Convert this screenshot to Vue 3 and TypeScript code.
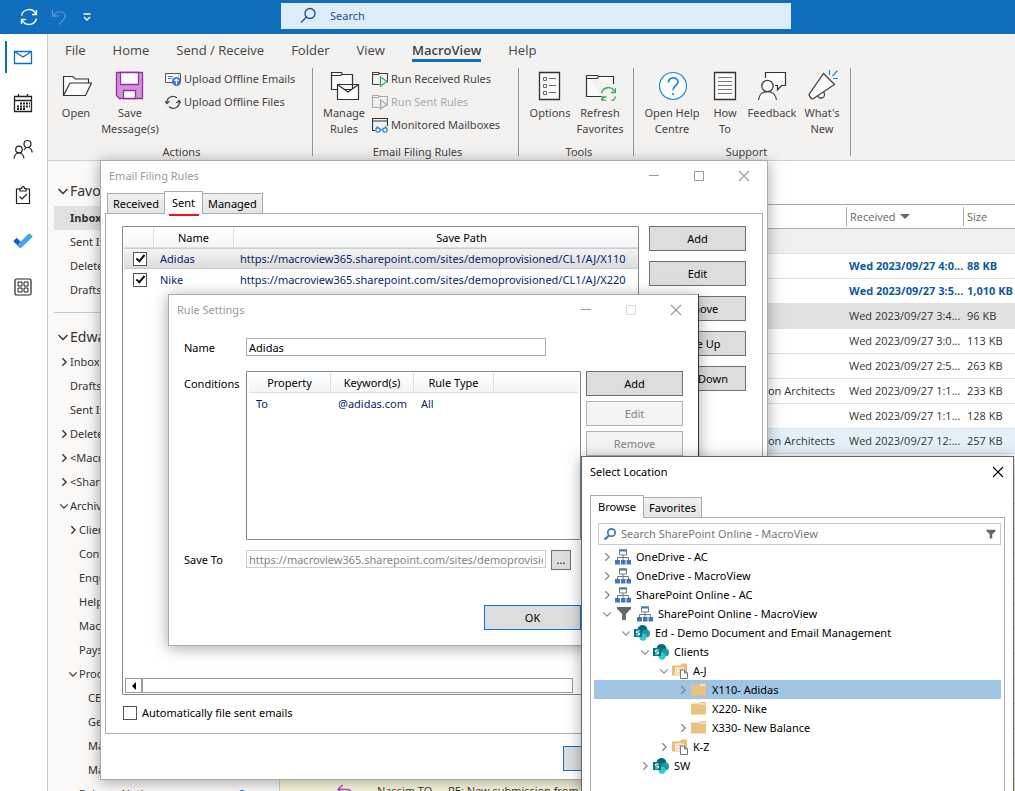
<script setup lang="ts">
import { ref } from 'vue'

interface Folder { name: string; level: number; chevron?: 'down' | 'right'; active?: boolean; count?: number }
interface Mail { from?: string; subject?: string; to?: string; received?: string; size?: string; kind?: string; reply?: boolean }
interface Node { name: string; level: number; chevron?: 'down' | 'right'; icon: string; filter?: boolean; selected?: boolean }

const tabs = ['File', 'Home', 'Send / Receive', 'Folder', 'View', 'MacroView', 'Help']
const activeTab = ref('MacroView')

const rail = ['mail', 'calendar', 'people', 'tasks', 'todo', 'apps']

const favorites: Folder[] = [
  { name: 'Inbox', level: 0, active: true },
  { name: 'Sent Items', level: 0 },
  { name: 'Deleted Items', level: 0 },
  { name: 'Drafts', level: 0 },
]

const mailbox: Folder[] = [
  { name: 'Inbox', level: 0, chevron: 'right' },
  { name: 'Drafts', level: 0 },
  { name: 'Sent Items', level: 0 },
  { name: 'Deleted Items', level: 0, chevron: 'right' },
  { name: '<MacroView>', level: 0, chevron: 'right' },
  { name: '<Shared>', level: 0, chevron: 'right' },
  { name: 'Archive', level: 0, chevron: 'down' },
  { name: 'Clients', level: 1, chevron: 'right' },
  { name: 'Contacts', level: 1 },
  { name: 'Enquiries', level: 1 },
  { name: 'Help', level: 1 },
  { name: 'MacroView', level: 1 },
  { name: 'Payslips', level: 1 },
  { name: 'Products', level: 1, chevron: 'down' },
  { name: 'CES', level: 2 },
  { name: 'General', level: 2 },
  { name: 'Mail', level: 2 },
  { name: 'Management', level: 2 },
  { name: 'Release Notices', level: 1, count: 8 },
]

const mails: Mail[] = [
  { received: 'Wed 2023/09/27 4:0...', size: '88 KB', kind: 'unread' },
  { received: 'Wed 2023/09/27 3:5...', size: '1,010 KB', kind: 'unread' },
  { received: 'Wed 2023/09/27 3:4...', size: '96 KB', kind: 'selected' },
  { received: 'Wed 2023/09/27 3:0...', size: '113 KB' },
  { received: 'Wed 2023/09/27 2:5...', size: '263 KB' },
  { to: 'Byron Architects', received: 'Wed 2023/09/27 1:1...', size: '233 KB' },
  { received: 'Wed 2023/09/27 1:1...', size: '128 KB' },
  { to: 'Byron Architects', received: 'Wed 2023/09/27 12:...', size: '257 KB', kind: 'hover' },
  ...Array.from({ length: 13 }, (): Mail => ({})),
  { from: 'Nassim TO...', subject: 'RE: New submission from', kind: 'flagged', reply: true },
]

const rules = ref([
  { on: true, name: 'Adidas', path: 'https://macroview365.sharepoint.com/sites/demoprovisioned/CL1/AJ/X110' },
  { on: true, name: 'Nike', path: 'https://macroview365.sharepoint.com/sites/demoprovisioned/CL1/AJ/X220' },
])
const ruleActions = ['Add', 'Edit', 'Remove', 'Move Up', 'Move Down']

const ruleName = ref('Adidas')
const saveTo = 'https://macroview365.sharepoint.com/sites/demoprovisioned/CL1/AJ/X110'
const autoFile = ref(false)
const query = ref('')

const tree: Node[] = [
  { name: 'OneDrive - AC', level: 0, chevron: 'right', icon: 'site' },
  { name: 'OneDrive - MacroView', level: 0, chevron: 'right', icon: 'site' },
  { name: 'SharePoint Online - AC', level: 0, chevron: 'right', icon: 'site' },
  { name: 'SharePoint Online - MacroView', level: 0, chevron: 'down', icon: 'site', filter: true },
  { name: 'Ed - Demo Document and Email Management', level: 1, chevron: 'down', icon: 'sharepoint' },
  { name: 'Clients', level: 2, chevron: 'down', icon: 'sharepoint' },
  { name: 'A-J', level: 3, chevron: 'down', icon: 'library' },
  { name: 'X110- Adidas', level: 4, chevron: 'right', icon: 'folder', selected: true },
  { name: 'X220- Nike', level: 4, icon: 'folder' },
  { name: 'X330- New Balance', level: 4, chevron: 'right', icon: 'folder' },
  { name: 'K-Z', level: 3, chevron: 'right', icon: 'library' },
  { name: 'SW', level: 2, chevron: 'right', icon: 'sharepoint' },
]
</script>

<template>
  <div class="app">
    <svg class="sprite" aria-hidden="true">
      <symbol id="i-mail" viewBox="0 0 20 20"><path d="M1.5 4.5h17v12h-17zM1.5 4.5l8.500 5.500 8.500-5.500" fill="none" stroke="#0f6cbd" stroke-width="1.300" /></symbol>
      <symbol id="i-calendar" viewBox="0 0 20 20">
        <path d="M1.500 3.500h17v15h-17zM1.500 7.500h17M5.500 1v3M14.500 1v3" fill="none" stroke="#222" stroke-width="1.300" />
        <path d="M7 10.500h10M4 13.500h13M4 16h8" fill="none" stroke="#222" stroke-width="2" stroke-dasharray="2 1" />
      </symbol>
      <symbol id="i-people" viewBox="0 0 20 20">
        <g fill="none" stroke="#222" stroke-width="1.200"><circle cx="6" cy="10.500" r="3.300" /><path d="M1 19.500c.4-3.500 2.300-5.500 5-5.500s4.500 2 5 5.500" /><circle cx="14.500" cy="5" r="3.500" /><path d="M11 11c.8-1.500 2-2.500 3.500-2.500 2.600 0 4.300 2 4.700 5" /></g>
      </symbol>
      <symbol id="i-tasks" viewBox="0 0 20 20"><path d="M7 4H3.500v14.500h13V4H13M7 6V3.500h1.500C8.500 1 11.500 1 11.500 3.500H13V6zM6.500 11.500l2.500 2.500 5-5" fill="none" stroke="#222" stroke-width="1.200" /></symbol>
      <symbol id="i-todo" viewBox="0 0 20 20"><path d="M2 8.500l6.500 6.500" stroke="#185abd" stroke-width="5" /><path d="M6 15.500L18 4" stroke="#41a5ee" stroke-width="5" /></symbol>
      <symbol id="i-apps" viewBox="0 0 20 20"><rect x="2" y="2" width="16" height="16" rx="1.500" fill="none" stroke="#222" stroke-width="1.200" /><path d="M5 5h4v4H5zM11 5h4v4h-4zM5 11h4v4H5zM11 11h4v4h-4z" fill="none" stroke="#222" /></symbol>

      <symbol id="i-sync" viewBox="0 0 18 18"><path d="M1.500 7.500A7.700 7.700 0 0 1 16 6M16.500 2v4.500H12M16.500 10.500A7.700 7.700 0 0 1 2 12M1.500 16v-4.500H6" fill="none" stroke="currentColor" stroke-width="1.300" /></symbol>
      <symbol id="i-search" viewBox="0 0 18 18"><circle cx="11" cy="6.500" r="5" fill="none" stroke="currentColor" stroke-width="1.300" /><path d="M7.500 10L2 15.500" stroke="currentColor" stroke-width="1.300" /></symbol>

      <symbol id="i-open" viewBox="0 0 32 32"><path d="M3.500 26.500v-19h9l3 2.500h13v4.500" fill="#fafafa" stroke="#333" stroke-width="1.200" /><path d="M3.500 26.500l6.500-12.500h21.500l-6 12.500z" fill="#fafafa" stroke="#333" stroke-width="1.200" /></symbol>
      <symbol id="i-save" viewBox="0 0 32 32"><path d="M2.500 3.500h26v26h-23l-3-3z" fill="#d592d8" stroke="#9331a0" stroke-width="1.300" /><path d="M6.500 3.500h18v12h-18zM9.500 21.500h12v8h-12z" fill="#fafafa" stroke="#9331a0" stroke-width="1.300" /></symbol>
      <symbol id="i-manage" viewBox="0 0 32 32"><path d="M3.500 3.500v17h21v-15h-10l-1-2h-10zM3.500 6.500h9l2-1" fill="#fafafa" stroke="#333" stroke-width="1.200" /><path d="M9.500 15.500h21v15h-21zM9.500 15.500L20 23l10.500-7.500" fill="#fafafa" stroke="#333" stroke-width="1.200" /></symbol>
      <symbol id="i-options" viewBox="0 0 32 32"><path d="M5.500 3.500h20v27h-20z" fill="#fafafa" stroke="#333" stroke-width="1.300" /><path d="M9.500 8.500h3v3h-3zM9.500 15.500h3v3h-3zM9.500 22.500h3v3h-3zM15 9.500h7M15 16.500h7M15 23.500h7" fill="none" stroke="#666" /></symbol>
      <symbol id="i-refresh" viewBox="0 0 32 32"><path d="M2.500 6.500v21h15M29.500 15V7.500h-15l-1-1h-11M2.500 9.500h11l1-2" fill="#fafafa" stroke="#333" stroke-width="1.200" /><path d="M17.500 24a7 7 0 0 1 13-1.500M31.500 19v4.500H27M31.500 27.500a7 7 0 0 1-13 1.500M18 32v-4h4.500" fill="none" stroke="#38a857" stroke-width="1.300" /></symbol>
      <symbol id="i-help" viewBox="0 0 32 32"><circle cx="17" cy="17" r="13.500" fill="#fafafa" stroke="#1e8bcd" stroke-width="1.200" /><path d="M12.500 13.500c0-6 9.500-6 9.500-.5 0 4-5 3.500-5 8M17 24v2" fill="none" stroke="#1e8bcd" stroke-width="1.700" /></symbol>
      <symbol id="i-howto" viewBox="0 0 32 32"><path d="M5.500 3.500h21v27h-21z" fill="#fafafa" stroke="#333" stroke-width="1.300" /><path d="M9 8.500h14M9 12.500h14M9 16.500h14M9 20.500h14M9 24.500h14" stroke="#777" /></symbol>
      <symbol id="i-feedback" viewBox="0 0 32 32"><path d="M9.500 9V3.500h20v13h-4L21.500 21v-4.500H19" fill="#fafafa" stroke="#333" stroke-width="1.200" /><path d="M2.500 31c.5-5 4-8.500 9-8.500s8.500 3.500 9 8.500" fill="#fafafa" stroke="#444" stroke-width="1.300" /><circle cx="11.500" cy="17" r="5.700" fill="#fafafa" stroke="#444" stroke-width="1.300" /></symbol>
      <symbol id="i-news" viewBox="0 0 32 32"><circle cx="15" cy="25.500" r="3.500" fill="#fafafa" stroke="#444" stroke-width="1.300" /><path d="M17.500 4.500l11 11L7.500 29.500q-1.500 1-3-1t-1.500-3z" fill="#fafafa" stroke="#444" stroke-width="1.300" /><path d="M23.500 1v5M31.500 1.500l-5 5.500M27 9.500h5" stroke="#1e8bcd" stroke-width="1.200" /></symbol>

      <symbol id="i-upmail" viewBox="0 0 16 16"><path d="M.5 2.500h15v9H.5z" fill="#fafafa" stroke="#555" /><path d="M3 5.500h5M3 7.500h4M13 4.500h1" stroke="#4a7ebb" /><circle cx="11.500" cy="10.500" r="4.500" fill="#3f7bbf" /><path d="M11.500 13.500v-5M9.500 10l2-2 2 2" fill="none" stroke="#fff" stroke-width="1.200" /></symbol>
      <symbol id="i-upfiles" viewBox="0 0 16 16"><path d="M2 9a6 6 0 0 1 10-5M14 6.500a6 6 0 0 1-10 6M0 7l2 2.500L4.500 7M11.500 9L14 6.500 16 9" fill="none" stroke="#444" stroke-width="1.200" /></symbol>
      <symbol id="i-run" viewBox="0 0 16 16"><path d="M.5 13.500V1.500h6l1 1h8v9M.5 3.500h6l1-1M.5 13.500h7" fill="none" stroke="#444" stroke-width="1.200" /><path d="M8.500 6v9l6.500-4.500z" fill="#fafafa" stroke="#38a857" stroke-width="1.300" /></symbol>
      <symbol id="i-run-off" viewBox="0 0 16 16"><path d="M.5 13.500V1.500h6l1 1h8v9M.5 3.500h6l1-1M.5 13.500h7" fill="none" stroke="#aaa" stroke-width="1.200" /><path d="M8.500 6v9l6.500-4.500z" fill="#eee" stroke="#aaa" stroke-width="1.300" /></symbol>
      <symbol id="i-monitor" viewBox="0 0 16 16"><path d="M3 13.500H.5v-12h15V9M.5 4h15" fill="none" stroke="#333" stroke-width="1.200" /><g fill="none" stroke="#1e8bcd" stroke-width="1.200"><circle cx="6" cy="13" r="2.200" /><circle cx="13" cy="13" r="2.200" /><path d="M8 12.500h3M4 11.500l2-2M15 11.500l-2-2" /></g></symbol>

      <symbol id="i-min" viewBox="0 0 12 12"><path d="M1 5.500h10" stroke="currentColor" /></symbol>
      <symbol id="i-max" viewBox="0 0 12 12"><path d="M1.500 1.500h9v9h-9z" fill="none" stroke="currentColor" /></symbol>
      <symbol id="i-close" viewBox="0 0 12 12"><path d="M1 1l10 10M11 1L1 11" stroke="currentColor" stroke-width="1.100" /></symbol>
      <symbol id="i-down" viewBox="0 0 12 12"><path d="M1.500 4L6 8.500 10.500 4" fill="none" stroke="currentColor" stroke-width="1.400" /></symbol>
      <symbol id="i-right" viewBox="0 0 12 12"><path d="M4 1.500L8.500 6 4 10.500" fill="none" stroke="currentColor" stroke-width="1.600" /></symbol>
      <symbol id="i-find" viewBox="0 0 14 14"><circle cx="8.500" cy="5.500" r="3.700" fill="none" stroke="#3c78b4" stroke-width="1.700" /><path d="M6 8.500L1.500 12.500" stroke="#3c78b4" stroke-width="2.300" /></symbol>
      <symbol id="i-filter" viewBox="0 0 16 16"><path d="M.5 1h15v2L10 8.500V15H6V8.500L.5 3z" fill="#666" /></symbol>

      <symbol id="i-site" viewBox="0 0 16 16"><path d="M4.500 1h7v5h-7z" fill="#fff" stroke="#777" /><path d="M4 .5h8v2H4z" fill="#4179b5" /><path d="M8 6v3M2.500 11V8.500h11V11M8 8.500V11" fill="none" stroke="#777" /><path d="M0 11h5v4.500H0zM6 11h4.500v4.500H6zM11.500 11H16v4.500h-4.500z" fill="#4179b5" /></symbol>
      <symbol id="i-sharepoint" viewBox="0 0 16 16"><circle cx="8.500" cy="5" r="5" fill="#036c70" /><circle cx="12" cy="8.500" r="4" fill="#1a9ba1" /><circle cx="9" cy="12.300" r="3.500" fill="#37c6d0" /><path d="M0 4h8v8H0z" fill="#03787c" /><path d="M5.800 6H3.300c-1 .2-1 1.800 0 2h1.500c1 .2 1 1.800 0 2H2.200" fill="none" stroke="#fff" stroke-width="1.100" /></symbol>
      <symbol id="i-library" viewBox="0 0 16 16"><path d="M0 2.500h8L9.500.5H15v12H0z" fill="#e9be7a" /><path d="M3.500 5h8v6h-8zM3.500 8h8M6 5v6" fill="none" stroke="#fff" /><path d="M8.500 7h4l3 3v5.500h-7zM12.500 7v3h3" fill="#fff" stroke="#777" /></symbol>
      <symbol id="i-folder" viewBox="0 0 16 16"><path d="M0 2.500h8L9.500 1H15v12.500H0z" fill="#eac282" /><path d="M9 3h5.500" stroke="#fff" /></symbol>
    </svg>

    <header class="titlebar">
      <div class="quick">
        <button aria-label="Send and receive"><svg width="18" height="18"><use href="#i-sync" /></svg></button>
        <button aria-label="Undo" class="faded"><svg width="18" height="18" viewBox="0 0 18 18"><path d="M2.500 1.500v6.500H9M3 7.500C7 2 15.500 3 15 8.500c0 3-4.500 6-6.500 8" fill="none" stroke="currentColor" stroke-width="1.300" /></svg></button>
        <button aria-label="Customize toolbar"><svg width="10" height="10" viewBox="0 0 10 10"><path d="M1.500 2h7M2 5l3 3 3-3" fill="none" stroke="currentColor" stroke-width="1.300" /></svg></button>
      </div>
      <label class="top-search">
        <svg width="18" height="18"><use href="#i-search" /></svg>
        <input type="text" placeholder="Search" aria-label="Search" />
      </label>
    </header>

    <div class="shell">
      <nav class="rail">
        <button v-for="(r, i) in rail" :key="r" :class="{ active: i === 0 }" :aria-label="r">
          <svg width="20" height="20"><use :href="'#i-' + r" /></svg>
        </button>
      </nav>

      <div class="main">
        <section class="ribbon">
          <nav class="tabs">
            <button v-for="t in tabs" :key="t" :class="{ active: t === activeTab }" @click="activeTab = t">{{ t }}</button>
          </nav>
          <div class="groups">
            <div class="group actions">
              <div class="tools">
                <button class="big w52"><svg><use href="#i-open" /></svg><span>Open</span></button>
                <button class="big w56"><svg><use href="#i-save" /></svg><span>Save<br />Message(s)</span></button>
                <div class="small-tools spaced">
                  <button><svg><use href="#i-upmail" /></svg>Upload Offline Emails</button>
                  <button><svg><use href="#i-upfiles" /></svg>Upload Offline Files</button>
                </div>
              </div>
              <div class="caption">Actions</div>
            </div>
            <div class="group filing">
              <div class="tools">
                <button class="big w56"><svg><use href="#i-manage" /></svg><span>Manage<br />Rules</span></button>
                <div class="small-tools">
                  <button><svg><use href="#i-run" /></svg>Run Received Rules</button>
                  <button disabled><svg><use href="#i-run-off" /></svg>Run Sent Rules</button>
                  <button><svg><use href="#i-monitor" /></svg>Monitored Mailboxes</button>
                </div>
              </div>
              <div class="caption">Email Filing Rules</div>
            </div>
            <div class="group extras">
              <div class="tools">
                <button class="big w52"><svg><use href="#i-options" /></svg><span>Options</span></button>
                <button class="big w48"><svg><use href="#i-refresh" /></svg><span>Refresh<br />Favorites</span></button>
              </div>
              <div class="caption">Tools</div>
            </div>
            <div class="group support">
              <div class="tools">
                <button class="big w60"><svg><use href="#i-help" /></svg><span>Open Help<br />Centre</span></button>
                <button class="big w46"><svg><use href="#i-howto" /></svg><span>How<br />To</span></button>
                <button class="big w48"><svg><use href="#i-feedback" /></svg><span>Feedback</span></button>
                <button class="big w52"><svg><use href="#i-news" /></svg><span>What's<br />New</span></button>
              </div>
              <div class="caption">Support</div>
            </div>
          </div>
        </section>

        <div class="content">
          <aside class="folders">
            <h2><svg width="12" height="12"><use href="#i-down" /></svg>Favorites</h2>
            <ul>
              <li v-for="f in favorites" :key="f.name" :class="{ active: f.active }"><i class="twist"></i><span>{{ f.name }}</span></li>
            </ul>
            <hr />
            <h2><svg width="12" height="12"><use href="#i-down" /></svg>Edward</h2>
            <ul>
              <li v-for="(f, i) in mailbox" :key="i" :class="'level' + f.level">
                <i class="twist"><svg v-if="f.chevron" width="10" height="10"><use :href="'#i-' + f.chevron" /></svg></i>
                <span>{{ f.name }}</span><b v-if="f.count">{{ f.count }}</b>
              </li>
            </ul>
          </aside>

          <div class="mail-list">
            <div class="list-top"></div>
            <table>
              <colgroup><col class="c-icon" /><col class="c-from" /><col /><col class="c-to" /><col class="c-received" /><col class="c-size" /></colgroup>
              <thead>
                <tr><th></th><th></th><th></th><th></th><th class="ruled">Received <i class="sort"></i></th><th class="ruled">Size</th></tr>
              </thead>
              <tbody>
                <tr class="band"><td colspan="6"></td></tr>
                <tr v-for="(m, i) in mails" :key="i" :class="m.kind">
                  <td class="reply"><svg v-if="m.reply" width="18" height="14" viewBox="0 0 18 14"><path d="M6.500 1L2 5.500 6.500 10M2 5.500h10q4 .5 4 6" fill="none" stroke="#b146c2" stroke-width="1.500" /></svg></td>
                  <td>{{ m.from }}</td><td>{{ m.subject }}</td><td class="to">{{ m.to }}</td><td class="received">{{ m.received }}</td><td class="size">{{ m.size }}</td>
                </tr>
              </tbody>
            </table>
          </div>
        </div>
      </div>
    </div>

    <section class="window rules-window" role="dialog" aria-label="Email Filing Rules">
      <header class="caption-bar">
        <span>Email Filing Rules</span>
        <button aria-label="Minimize"><svg><use href="#i-min" /></svg></button>
        <button aria-label="Maximize"><svg><use href="#i-max" /></svg></button>
        <button aria-label="Close"><svg><use href="#i-close" /></svg></button>
      </header>
      <div class="tab-row">
        <button>Received</button><button class="active marked">Sent</button><button>Managed</button>
      </div>
      <div class="tab-panel">
        <div class="rules-row">
          <div class="list-box rules-box">
            <table>
              <colgroup><col class="r-check" /><col class="r-name" /><col class="r-path" /></colgroup>
              <thead><tr><th></th><th>Name</th><th>Save Path</th></tr></thead>
              <tbody>
                <tr v-for="(r, i) in rules" :key="r.name" :class="{ selected: i === 0 }">
                  <td class="check"><input v-model="r.on" type="checkbox" :aria-label="r.name" /></td><td>{{ r.name }}</td><td>{{ r.path }}</td>
                </tr>
              </tbody>
            </table>
            <div class="scrollbar"><button aria-label="Scroll left"><i></i></button><div class="thumb"></div></div>
          </div>
          <div class="button-col wide-gap">
            <button v-for="a in ruleActions" :key="a" class="btn">{{ a }}</button>
          </div>
        </div>
        <label class="auto"><input v-model="autoFile" type="checkbox" />Automatically file sent emails</label>
      </div>
      <footer><button class="btn primary">OK</button></footer>
    </section>

    <section class="window settings-window" role="dialog" aria-label="Rule Settings">
      <header class="caption-bar">
        <span>Rule Settings</span>
        <button aria-label="Minimize"><svg><use href="#i-min" /></svg></button>
        <button aria-label="Maximize" disabled><svg><use href="#i-max" /></svg></button>
        <button aria-label="Close"><svg><use href="#i-close" /></svg></button>
      </header>
      <div class="form">
        <div class="field">
          <label for="rule-name">Name</label>
          <input id="rule-name" v-model="ruleName" type="text" />
        </div>
        <div class="field tall">
          <span class="label">Conditions</span>
          <div class="list-box cond-box">
            <table>
              <colgroup><col class="k-prop" /><col class="k-word" /><col class="k-type" /><col /></colgroup>
              <thead><tr><th>Property</th><th>Keyword(s)</th><th>Rule Type</th><th></th></tr></thead>
              <tbody><tr><td>To</td><td>@adidas.com</td><td>All</td><td></td></tr></tbody>
            </table>
          </div>
          <div class="button-col">
            <button class="btn">Add</button><button class="btn" disabled>Edit</button><button class="btn" disabled>Remove</button>
          </div>
        </div>
        <div class="field">
          <label for="save-to">Save To</label>
          <input id="save-to" type="text" :value="saveTo" disabled />
          <button class="btn browse" aria-label="Browse for location">...</button>
        </div>
      </div>
      <footer><button class="btn primary">OK</button></footer>
    </section>

    <section class="window location-window" role="dialog" aria-label="Select Location">
      <header class="caption-bar">
        <span>Select Location</span>
        <button aria-label="Close"><svg><use href="#i-close" /></svg></button>
      </header>
      <div class="tab-row"><button class="active">Browse</button><button>Favorites</button></div>
      <div class="tab-panel">
        <label class="tree-search">
          <svg width="14" height="14"><use href="#i-find" /></svg>
          <input v-model="query" type="text" placeholder="Search SharePoint Online - MacroView" aria-label="Search SharePoint Online - MacroView" />
          <svg width="10" height="12"><use href="#i-filter" /></svg>
        </label>
        <ul class="tree">
          <li v-for="n in tree" :key="n.name" :class="{ selected: n.selected }" :style="{ paddingLeft: 5 + n.level * 19 + 'px' }">
            <i class="twist"><svg v-if="n.chevron" width="10" height="10"><use :href="'#i-' + n.chevron" /></svg></i>
            <svg v-if="n.filter" class="funnel" width="18" height="15"><use href="#i-filter" /></svg>
            <svg width="16" height="16"><use :href="'#i-' + n.icon" /></svg>
            <span>{{ n.name }}</span>
          </li>
        </ul>
      </div>
    </section>
  </div>
</template>

<style>
body { margin: 0; }
</style>

<style scoped>
.app { position: relative; display: flex; flex-direction: column; height: 100vh; overflow: hidden; background: #fff; font: 11px/16px "Noto Sans", "Open Sans", sans-serif; color: #333; }
.app *, .app *::before, .app *::after { box-sizing: border-box; }
button, input { font: inherit; color: inherit; }
button { margin: 0; padding: 0; border: 0; background: none; white-space: nowrap; }
ul { list-style: none; margin: 0; padding: 0; }
svg { flex: none; display: block; }
.sprite { position: absolute; width: 0; height: 0; }
table { border-collapse: separate; border-spacing: 0; table-layout: fixed; }
th { font-weight: 400; }
th, td { padding: 0; white-space: nowrap; overflow: hidden; }

.titlebar { flex: none; display: grid; grid-template-columns: 281fr 510fr 224fr; height: 34px; background: #106ebe; color: #fff; }
.quick { display: flex; align-items: center; gap: 12px; padding-left: 20px; }
.quick .faded { color: #4a95d9; }
.quick button:last-child { margin-left: 2px; }
.top-search { display: flex; align-items: center; gap: 13px; margin: 3px 0 5px; padding-left: 18px; background: #deecf9; color: #1d4f87; }
.top-search input { flex: 1; min-width: 0; border: 0; padding: 0; background: none; outline: 0; }
.top-search input::placeholder { color: #1d4f87; opacity: 1; }

.shell { flex: 1; display: flex; min-height: 0; }
.rail { flex: none; display: flex; flex-direction: column; width: 48px; border-right: 1px solid #c8c8c8; }
.rail button { position: relative; display: flex; align-items: center; justify-content: center; height: 46px; padding-right: 2px; }
.rail button.active::before { content: ""; position: absolute; left: 5px; top: 7px; width: 2px; height: 32px; background: #106ebe; }
.main { flex: 1; min-width: 0; display: flex; flex-direction: column; }

.ribbon { flex: none; height: 127px; border-bottom: 1px solid #cfcfcf; background: #f3f2f1; color: #444; }
.tabs { display: flex; gap: 27px; height: 34px; padding: 4px 0 0 17px; font-family: "Open Sans", "Noto Sans", sans-serif; font-size: 13px; }
.tabs button { height: 24px; padding-top: 2px; border-bottom: 3px solid transparent; }
.tabs button.active { font-weight: 600; border-color: #106ebe; }
.groups { display: flex; height: 92px; }
.group { position: relative; }
.group::after { content: ""; position: absolute; right: 0; top: 0; width: 1px; height: 88px; background: #999; }
.actions { width: 265px; padding-left: 2px; }
.filing { width: 206px; padding-left: 3px; }
.extras { width: 115px; padding-left: 5px; }
.support { width: 217px; padding-left: 8px; }
.tools { display: flex; height: 76px; }
.caption { text-align: center; }
.big { display: flex; flex-direction: column; align-items: center; justify-content: flex-start; padding-top: 1px; }
.big svg { width: 32px; height: 32px; margin-bottom: 4px; overflow: visible; }
.w46 { width: 46px; } .w48 { width: 48px; } .w52 { width: 52px; } .w56 { width: 56px; } .w60 { width: 60px; }
.small-tools { display: flex; flex-direction: column; align-items: flex-start; }
.spaced { margin-left: 7px; }
.small-tools button { display: flex; align-items: center; gap: 3px; height: 23px; padding-bottom: 2px; }
.small-tools button:disabled { color: #aaa; }
.small-tools svg { width: 16px; height: 16px; }

.content { flex: 1; display: flex; min-height: 0; overflow: hidden; }
.folders { flex: none; width: 232px; padding: 17px 0 0 6px; border-right: 1px solid #d0d0d0; background: #faf9f8; }
.folders h2 { display: flex; align-items: center; gap: 1px; height: 26px; margin: 0; padding-left: 3px; font-size: 14px; font-weight: 400; }
.folders h2:first-child { margin-bottom: 2px; }
.folders li { display: flex; align-items: center; height: 24px; }
.folders .level1 { padding-left: 9px; }
.folders .level2 { padding-left: 18px; }
.folders .active { background: #e1e1e1; font-weight: 700; }
.folders b { margin: 0 34px 0 auto; color: #106ebe; }
.folders hr { height: 1px; margin: 10px 0 11px; border: 0; background: #c8c8c8; }
.folders .twist { display: flex; justify-content: center; width: 16px; padding-left: 4px; }
.mail-list { flex: 1; min-width: 0; overflow: hidden; font-family: "Open Sans", "Noto Sans", sans-serif; }
.mail-list table { width: 100%; }
.list-top { height: 43px; }
.c-icon { width: 97px; } .c-from { width: 71px; } .c-to { width: 150px; } .c-received { width: 117px; } .c-size { width: 52px; }
.mail-list th { position: relative; height: 25px; border: solid #a3acba; border-width: 1px 0; text-align: left; color: #666; }
.mail-list .ruled { padding-left: 4px; }
.ruled::before { content: ""; position: absolute; left: 0; top: 2px; bottom: 2px; width: 1px; background: #a3acba; }
.sort { display: inline-block; margin-left: 2px; border: 5px solid transparent; border-top-color: #666; border-bottom: 0; vertical-align: 2px; }
.mail-list td { height: 25px; border-bottom: 1px solid #e1e1e1; }
.mail-list .band td { background: #efefef; }
.mail-list .received { padding-left: 3px; }
.mail-list .size { padding-left: 4px; overflow: visible; }
.mail-list .to { padding-right: 11px; text-align: right; }
.mail-list .reply { padding-left: 56px; }
.unread { font-weight: 700; color: #0b5a9e; }
.selected td { background: #e1e1e1; }
.hover td { background: #e5f1fa; }
.flagged td { background: #fbf8dd; }

.window { position: absolute; display: flex; flex-direction: column; border: 1px solid #aaa; background: #fff; color: #000; box-shadow: 0 2px 14px rgba(0, 0, 0, .35); }
.rules-window { left: 100px; top: 160px; width: 668px; height: 620px; }
.settings-window { left: 168px; top: 294px; width: 531px; height: 352px; border-right-color: #333; }
.location-window { left: 581px; top: 456px; width: 433px; height: 344px; border-color: #666; }
.caption-bar { flex: none; display: flex; align-items: center; height: 30px; padding-left: 8px; color: #999; }
.rules-window .caption-bar { padding-right: 1px; }
.caption-bar span { flex: 1; }
.caption-bar button { display: flex; justify-content: center; width: 45px; }
.caption-bar button:disabled { color: #ddd; }
.caption-bar svg { width: 12px; height: 12px; }
.location-window .caption-bar { color: #000; }
.location-window .caption-bar button { width: 30px; }

.tab-row { flex: none; display: flex; align-items: flex-end; height: 22px; padding-left: 6px; }
.tab-row button { height: 20px; padding: 0 5px; border: 1px solid #acacac; border-bottom: 0; margin-right: -1px; background: linear-gradient(#f0f0f0, #e5e5e5); }
.tab-row .active { position: relative; height: 23px; margin-bottom: -1px; padding: 0 7px 1px; background: #fff; }
.marked::after { content: ""; position: absolute; left: 4px; right: 3px; bottom: -2px; height: 2px; background: #f01020; }
.tab-panel { border: 1px solid #acacac; }
.rules-window .tab-panel { display: flex; flex-direction: column; height: 521px; margin: 0 4px; padding: 12px 16px; }
.rules-row { display: flex; gap: 10px; height: 470px; }
.list-box { display: flex; flex-direction: column; border: 1px solid #828790; border-radius: 1px; padding: 1px; overflow: hidden; }
.rules-box { flex: 1; min-width: 0; }
.list-box th { height: 20px; border: solid #dcdee2; border-width: 0 1px 1px 0; background: linear-gradient(#fff, #f4f5f7); }
.list-box td { height: 21px; padding-left: 6px; color: #0a1f6b; }
.rules-box table { width: 566px; }
.r-check { width: 30px; } .r-name { width: 80px; }
.rules-box .selected td { border: solid #ccc; border-width: 1px 0; background: linear-gradient(#f4f4f4, #dcdcdc); }
.rules-box .check { padding-left: 9px; }
input[type="checkbox"] { appearance: none; display: block; flex: none; width: 14px; height: 14px; margin: 0; border: 1px solid #555; background: #fff; }
input[type="checkbox"]:checked::after { content: ""; display: block; width: 5px; height: 9px; margin: 0 0 0 4px; border: solid #111; border-width: 0 2px 2px 0; transform: rotate(40deg); }
.scrollbar { display: flex; height: 15px; margin: auto 64px 0 1px; }
.scrollbar button { display: flex; align-items: center; justify-content: center; width: 17px; border: 1px solid #a09a90; }
.scrollbar i { border: 4px solid transparent; border-right-color: #000; border-left: 0; }
.scrollbar .thumb { flex: 1; border: 1px solid #a09a90; }
.button-col { flex: none; display: flex; flex-direction: column; gap: 5px; width: 97px; }
.wide-gap { gap: 10px; }
.btn { width: 97px; height: 25px; border: 1px solid #707070; background: #ddd; text-align: center; }
.btn:disabled { border-color: #adb2b5; background: #f4f4f4; color: #838383; }
.primary { border-color: #0078d7; }
.auto { display: flex; align-items: center; gap: 5px; padding: 10px 0 0 1px; }
footer { display: flex; justify-content: flex-end; }
.rules-window footer { padding: 12px 107px 0 0; }
.settings-window footer { padding: 35px 117px 0 0; }

.form { display: flex; flex-direction: column; padding: 13px 15px 0; }
.field { display: flex; align-items: flex-start; height: 20px; margin-bottom: 13px; }
.field label, .field .label { width: 62px; padding-top: 2px; }
.field .label { padding-top: 5px; }
.field input { width: 300px; height: 18px; padding: 0 2px; border: 1px solid #abadb3; background: #fff; }
.field input:disabled { border-color: #ccc; color: #838383; }
.tall { height: 169px; margin-bottom: 10px; }
.cond-box { flex: 1; height: 169px; margin-right: 5px; padding: 1px 2px; }
.field:last-child { margin-bottom: 0; }
.browse { width: 20px; height: 20px; margin-left: 5px; }
.cond-box table { width: 100%; }
.k-prop { width: 82px; } .k-word { width: 83px; } .k-type { width: 80px; }
.cond-box th:last-child { border-right: 0; }
.cond-box td { padding-left: 7px; }

.location-window .tab-row { height: 30px; padding-left: 8px; }
.location-window .tab-panel { flex: 1; margin: 0 8px; padding: 5px 3px 0; border-bottom: 0; }
.tree-search { display: flex; align-items: center; gap: 4px; height: 22px; margin: 0 0 2px 4px; padding: 0 4px; border: 1px solid #ccc; }
.tree-search input { flex: 1; min-width: 0; padding: 0; border: 0; outline: 0; background: none; }
.tree-search input::placeholder { color: #767676; opacity: 1; }
.tree li { display: flex; align-items: center; height: 19px; }
.tree li.selected { background: #9fc4e4; }
.tree .twist { display: flex; justify-content: center; width: 16px; color: #888; }
.tree .funnel { margin-right: 4px; }
.tree span { margin-left: 5px; }
</style>
